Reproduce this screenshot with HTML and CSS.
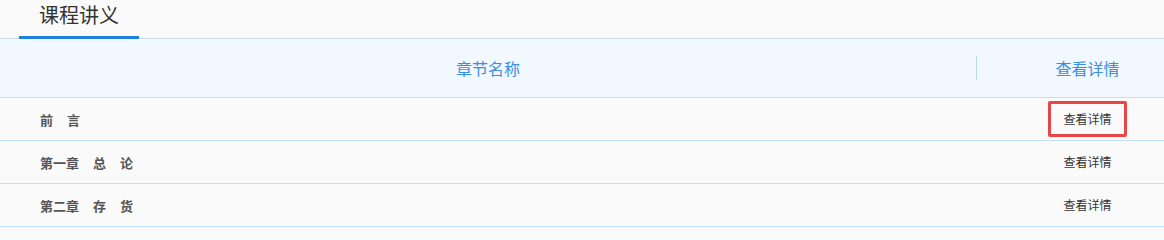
FILE: index.html
```html
<!DOCTYPE html>
<html lang="zh-CN">
<head>
<meta charset="utf-8">
<title>课程讲义</title>
<link rel="stylesheet" href="styles.css">
</head>
<body>
<div class="page">
  <div class="tabs">
    <div class="tab active">课程讲义</div>
  </div>
  <div class="table">
    <div class="thead">
      <div class="th th-name">章节名称</div>
      <div class="th th-action">查看详情</div>
    </div>
    <div class="row">
      <div class="cell name"><span class="seg">前</span><span class="seg">言</span></div>
      <div class="cell action"><span class="link highlight">查看详情</span></div>
    </div>
    <div class="row">
      <div class="cell name"><span class="seg">第一章</span><span class="seg">总</span><span class="seg">论</span></div>
      <div class="cell action"><span class="link">查看详情</span></div>
    </div>
    <div class="row">
      <div class="cell name"><span class="seg">第二章</span><span class="seg">存</span><span class="seg">货</span></div>
      <div class="cell action"><span class="link">查看详情</span></div>
    </div>
  </div>
</div>
</body>
</html>
```

FILE: styles.css
```css
* { box-sizing: border-box; }
html, body {
  margin: 0;
  padding: 0;
  background: #fafafa;
  font-family: "Noto Sans CJK SC", "Noto Sans", sans-serif;
}
.page {
  width: 1164px;
}
.tabs {
  height: 39px;
  border-bottom: 1px solid #c7dcec;
  padding-left: 19px;
  display: flex;
  align-items: flex-end;
}
.tab {
  width: 120px;
  height: 39px;
  margin-bottom: -1px;
  font-size: 20px;
  line-height: 28px;
  color: #333;
  text-align: center;
  padding-top: 1px;
}
.tab.active {
  border-bottom: 3px solid #1e80db;
}
.thead {
  display: grid;
  grid-template-columns: 976px 1fr;
  height: 59px;
  background: #f1f8ff;
  border-bottom: 1px solid #c5dff5;
  align-items: center;
}
.th {
  font-size: 16px;
  color: #3a8ee6;
  line-height: 24px;
}
.th-name {
  text-align: center;
}
.th-action {
  border-left: 1px solid #b9daf5;
  height: 24px;
  text-align: center;
  padding-left: 34px;
}
.row {
  display: grid;
  grid-template-columns: 976px 1fr;
  height: 43px;
  border-bottom: 1px solid #c5dff5;
  align-items: center;
}
.cell.name {
  padding-left: 40px;
  font-size: 13px;
  font-weight: 700;
  color: #555;
  display: flex;
  gap: 14px;
}
.cell.action {
  text-align: center;
  padding-left: 35px;
}
.link {
  display: inline-block;
  font-size: 12px;
  color: #333;
  line-height: 30px;
  padding: 0 12px;
  border: 3px solid transparent;
}
.link.highlight {
  border-color: #e8474a;
  border-radius: 2px;
}
```
